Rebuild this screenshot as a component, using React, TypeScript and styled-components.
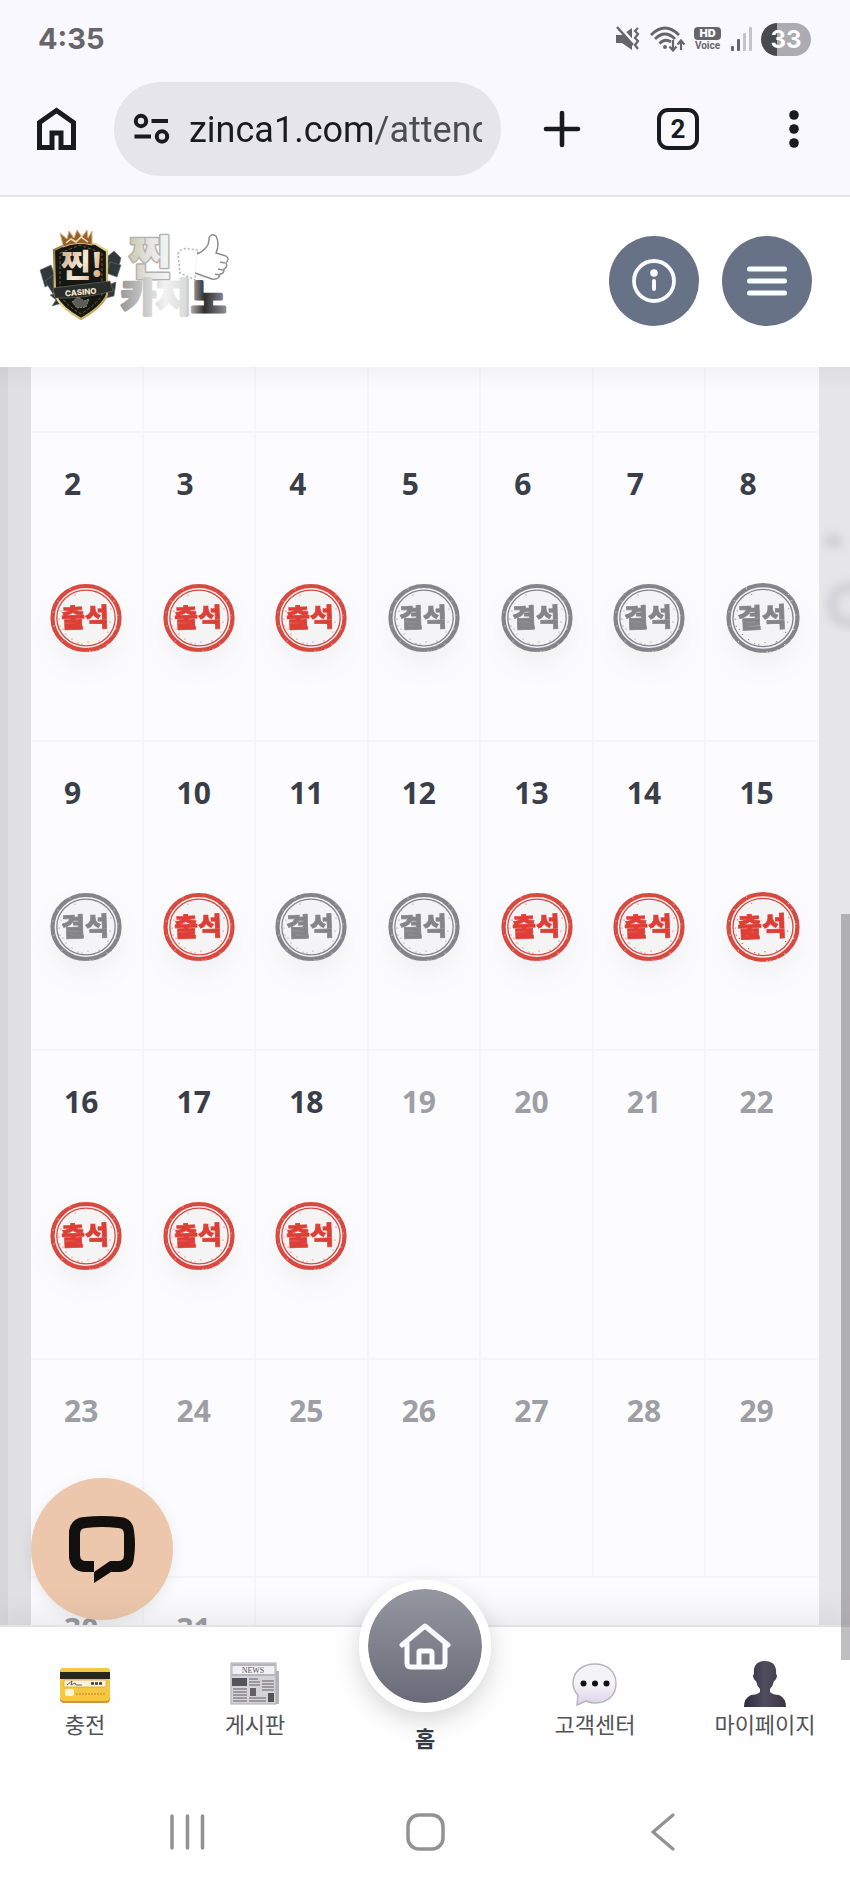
import React from "react";
import styled, { createGlobalStyle } from "styled-components";

const sans = `"Noto Sans", "Noto Sans CJK KR", sans-serif`;
const korean = `"Noto Sans CJK KR", "Noto Sans", sans-serif`;

const GlobalStyle = createGlobalStyle`
  *, *::before, *::after { box-sizing: border-box; }
  html, body { margin: 0; padding: 0; }
  body { font-family: ${sans}; background: #ffffff; }
  button { border: 0; padding: 0; background: none; font: inherit; color: inherit; cursor: pointer; }
  svg { display: block; }
`;

const Shell = styled.div`
  position: relative;
  display: flex;
  flex-direction: column;
  height: 100vh;
  overflow: hidden;
`;

/* ---------- phone status bar and browser toolbar ---------- */

const BrowserChrome = styled.div`
  flex: none;
  background: #f9f8fe;
  border-bottom: 2px solid #e5e2ea;
`;

const StatusBar = styled.div`
  display: flex;
  align-items: center;
  justify-content: space-between;
  height: 80px;
  padding: 0 39px 2px 38px;
`;

const Clock = styled.time`
  font: 700 29px/40px Inter, sans-serif;
  color: #66656a;
`;

const StatusIcons = styled.div`
  display: flex;
  align-items: center;
  gap: 9px;
  color: #66656a;
`;

const VoiceBadge = styled.div`
  display: flex;
  flex-direction: column;
  align-items: center;
  width: 27px;
  font: 700 10px/12px Roboto, sans-serif;
`;

const HdTag = styled.span`
  width: 27px;
  border-radius: 4px;
  background: #66656a;
  color: #f9f8fe;
  font: 900 11px/13px Inter, sans-serif;
  text-align: center;
`;

const Battery = styled.div`
  width: 50px;
  border-radius: 17px;
  background: linear-gradient(90deg, #4a494e 16px, #acabb1 16px);
  color: #ffffff;
  font: 700 24px/33px Inter, sans-serif;
  text-align: center;
`;

const Toolbar = styled.div`
  display: flex;
  align-items: center;
  height: 115px;
  padding: 0 35px 17px 37px;
  color: #1a1b20;
`;

const AddressPill = styled.label`
  display: flex;
  flex: 1;
  align-items: center;
  gap: 19px;
  min-width: 0;
  height: 94px;
  margin: 0 40px 0 38px;
  padding: 0 19px;
  border-radius: 47px;
  background: #e6e5ec;
`;

const AddressInput = styled.input`
  flex: 1;
  min-width: 0;
  height: 62px;
  padding: 2px 0 0;
  border: 0;
  outline: 0;
  background: linear-gradient(90deg, #1a1b20 186px, #4b4c52 188px);
  background-clip: text;
  -webkit-text-fill-color: transparent;
  font: 400 36px/60px Roboto, sans-serif;
`;

const ToolbarActions = styled.div`
  display: flex;
  gap: 74px;
`;

const ToolButton = styled.button`
  display: flex;
  align-items: center;
  justify-content: center;
  min-width: 39px;
  height: 44px;
`;

const ActionButton = styled(ToolButton)`
  width: 42px;
`;

const TabCount = styled.span`
  width: 42px;
  border: 4px solid #1a1b20;
  border-radius: 11px;
  font: 700 26px/34px Roboto, sans-serif;
  text-align: center;
`;

/* ---------- site header ---------- */

const SiteHeader = styled.header`
  display: flex;
  flex: none;
  align-items: center;
  justify-content: space-between;
  height: 170px;
  padding: 0 38px 2px 30px;
  background: #ffffff;
`;

const HeaderButtons = styled.div`
  display: flex;
  gap: 23px;
`;

const RoundButton = styled.button`
  display: flex;
  align-items: center;
  justify-content: center;
  width: 90px;
  height: 90px;
  border-radius: 50%;
  background: #687287;
`;

/* ---------- calendar ---------- */

const Main = styled.main`
  position: relative;
  flex: 1;
  min-height: 0;
  padding: 0 31px;
  overflow: hidden;
  background: linear-gradient(90deg, #d7d6d9 8px, #e1e0e3 8px, #e1e0e3 50%, #e6e5e9 50%);

  &::after {
    content: "";
    position: absolute;
    inset: 0 0 auto;
    height: 24px;
    background: linear-gradient(rgba(0, 0, 0, 0.035), transparent);
  }
`;

const Backdrop = styled.svg`
  position: absolute;
  top: 150px;
  right: 0;
`;

const Calendar = styled.table`
  width: 100%;
  table-layout: fixed;
  border-spacing: 0;
  background: #fcfbfe;
`;

const Week = styled.tr<{ $height: number }>`
  height: ${(p) => p.$height}px;
`;

const DayCell = styled.td`
  padding: 31px 0 0;
  border-right: 2px solid #f6f5f8;
  border-bottom: 2px solid #f5f4f7;
  vertical-align: top;

  &:last-child { border-right: 0; }
`;

const DayNumber = styled.div<{ $muted: boolean }>`
  padding-left: 33px;
  font-size: 30px;
  font-weight: 700;
  line-height: 40px;
  color: ${(p) => (p.$muted ? "#9d9fa4" : "#393e49")};
`;

const StampImage = styled.svg<{ $large: boolean }>`
  width: ${(p) => (p.$large ? 74 : 72)}px;
  height: ${(p) => (p.$large ? 74 : 72)}px;
  margin: ${(p) => (p.$large ? 77 : 78)}px auto 0;
  overflow: visible;
  border-radius: 50%;
  filter: drop-shadow(0 14px 12px rgba(60, 60, 70, 0.06));
`;

const ChatButton = styled.button`
  position: absolute;
  left: 31px;
  bottom: 5px;
  z-index: 1;
  display: flex;
  align-items: center;
  justify-content: center;
  width: 142px;
  height: 142px;
  border-radius: 50%;
  background: #ecc7ab;
  box-shadow: 0 4px 16px rgba(0, 0, 0, 0.08);
`;

/* ---------- bottom navigation ---------- */

const BottomNav = styled.nav`
  position: relative;
  z-index: 2;
  display: flex;
  flex: none;
  height: 148px;
  border-top: 2px solid #e3e2e5;
  background: #fefefe;
  box-shadow: 0 -8px 32px rgba(0, 0, 0, 0.08);
`;

const NavLink = styled.a`
  display: flex;
  flex: 1;
  flex-direction: column;
  align-items: center;
  gap: 1px;
  padding-top: 34px;
  color: #505256;
  font: 400 22px/30px ${korean};
  text-decoration: none;
  white-space: nowrap;
`;

const HomeLink = styled(NavLink)`
  gap: 10px;
  margin-top: -47px;
  padding-top: 0;
  color: #343a46;
  font-weight: 700;
`;

const HomeDisc = styled.span`
  display: flex;
  align-items: center;
  justify-content: center;
  width: 132px;
  height: 132px;
  border: 9px solid #ffffff;
  border-radius: 50%;
  background: linear-gradient(#9497a0, #696b78) padding-box;
  box-shadow: 0 8px 24px rgba(0, 0, 0, 0.16);
`;

const SystemNav = styled.div`
  position: relative;
  z-index: 2;
  display: flex;
  flex: none;
  align-items: center;
  justify-content: space-between;
  height: 116px;
  padding: 2px 168px 0;
  background: #fefefe;
  color: #929196;
`;

const ScrollThumb = styled.div`
  position: absolute;
  top: 48.4%;
  right: 0;
  z-index: 3;
  width: 9px;
  height: 39.5%;
  background: rgba(90, 88, 92, 0.38);
`;

/* ---------- drawings ---------- */

const HomeOutline = () => (
  <svg width="39" height="44" viewBox="0 0 39 44" fill="none" stroke="currentColor" strokeWidth="5">
    <path d="M2.5 40.5V15.5L19.5 3.5L36.5 15.5V40.5H24V26H15V40.5Z" />
  </svg>
);

const TuneIcon = () => (
  <svg width="37" height="32" viewBox="0 0 37 32" fill="none" stroke="currentColor" strokeWidth="4">
    <circle cx="8" cy="8" r="5.2" />
    <path d="M18.5 8H35M1.5 23.5H18" />
    <circle cx="29" cy="23.5" r="5.2" />
  </svg>
);

const MuteIcon = () => (
  <svg width="26" height="26" viewBox="0 0 26 26">
    <path d="M1 9H7L17 2V24L7 17H1Z" fill="currentColor" />
    <path d="M3 -1L20 18" stroke="#f9f8fe" strokeWidth="3" />
    <path d="M2 1L18 19" stroke="currentColor" strokeWidth="2.5" />
    <path d="M23 2l-3 3 3 3-3 4 3 3-3 4 3 4" fill="none" stroke="currentColor" strokeWidth="2.2" />
  </svg>
);

const WifiIcon = () => (
  <svg width="35" height="26" viewBox="0 0 35 26" fill="none" stroke="currentColor" strokeWidth="2.8">
    <path d="M1 9Q15 -5 29 9M5 13Q15 3 25 13M9.5 17.500Q15 12 21 16" />
    <circle cx="15" cy="21" r="2" fill="currentColor" stroke="none" />
    <path d="M23 14V24M19.5 20.5L23 24.5L26.5 20.5M31 24V15M27.5 18.5L31 14.5L34.5 18.5" strokeWidth="2.2" />
  </svg>
);

const SignalIcon = () => (
  <svg width="22" height="24" viewBox="0 0 22 24">
    <rect x="1" y="19" width="3" height="5" rx="1" fill="currentColor" />
    <rect x="7" y="12" width="3" height="12" rx="1" fill="currentColor" />
    <rect x="13" y="6" width="3" height="18" rx="1" fill="#c4c3c9" />
    <rect x="19" y="0" width="3" height="24" rx="1" fill="#c4c3c9" />
  </svg>
);

const Logo = () => (
  <svg width="210" height="105" viewBox="0 9 210 105" role="img" aria-label="찐카지노">
    <defs>
      <linearGradient id="gold" x1="0" y1="0" x2="1" y2="1">
        <stop offset="0" stopColor="#8a6a2c" />
        <stop offset="0.4" stopColor="#f0dc96" />
        <stop offset="1" stopColor="#b09646" />
      </linearGradient>
      <linearGradient id="face" x1="0" y1="0" x2="1" y2="0.6">
        <stop offset="0" stopColor="#c69a75" />
        <stop offset="0.6" stopColor="#f5ead9" />
        <stop offset="1" stopColor="#dcae86" />
      </linearGradient>
      <linearGradient id="silverTop">
        <stop offset="0" stopColor="#cbc7b2" />
        <stop offset="0.5" stopColor="#e6e6e3" />
        <stop offset="1" stopColor="#f6f6f6" />
      </linearGradient>
      <linearGradient id="silverBottom" x1="92" x2="195" y1="0" y2="0" gradientUnits="userSpaceOnUse">
        <stop offset="0" stopColor="#9b9b9b" />
        <stop offset="0.42" stopColor="#f2f2f2" />
        <stop offset="0.62" stopColor="#dadada" />
        <stop offset="0.8" stopColor="#2f2f2f" />
        <stop offset="1" stopColor="#8a8a8a" />
      </linearGradient>
    </defs>
    <g fill="#30383b" stroke="#667074" strokeWidth="0.6">
      <path d="M10 50L21 45L27 61L15 67Z" />
      <path d="M15 61L26 53L30 69L23 74Z" />
      <path d="M78 36L84 31L91 38L87 54L77 49Z" />
      <path d="M80 42L91 45L87 57L76 53Z" />
      <path d="M20 75L37 70L36 82L22 86L26 80ZM69 68L86 62L84 76L72 79Z" />
    </g>
    <path d="M24 30L37 24L50 22L66 24L77 31L77 75Q72 87 51 99Q31 88 25 75Z" fill="#151713" stroke="url(#gold)" strokeWidth="2.2" />
    <path d="M30 33L50 25L72 33V75Q67 84 51 94Q36 85 30 75Z" fill="none" stroke="#7d7654" strokeWidth="0.8" strokeDasharray="3 2" />
    <path d="M33 25L30 13L37 19L39 11L44 18L47 10L52 17L57 10L58 18L62 11L62 25Q47 21 33 27Z" fill="#936130" stroke="#ddb278" strokeWidth="1" />
    <path d="M36 23L41 19L46 22L51 17L58 22" fill="none" stroke="#f4dfb0" strokeWidth="1.5" />
    <text x="31" y="57" fontFamily="Noto Sans CJK KR, sans-serif" fontWeight="900" fontSize="32" fill="url(#face)">찐!</text>
    <path d="M23 68Q48 65 80 61L83 71Q54 79 25 78Z" fill="#292d2b" stroke="#757565" strokeWidth="0.6" />
    <text x="35" y="75" transform="rotate(-5 51 72)" fontFamily="Inter, sans-serif" fontWeight="800" fontSize="8" fill="#f3e6ca">CASINO</text>
    <path d="M42 82L48 77L54 81L59 79L56 87L47 88Z" fill="#5b5c55" stroke="#a7a395" strokeWidth="0.7" strokeDasharray="2 1" />
    <g fontFamily="Noto Sans CJK KR, sans-serif" fontWeight="900" strokeWidth="3" strokeLinejoin="round" paintOrder="stroke">
      <text x="99" y="54" fontSize="46" fill="url(#silverTop)" stroke="#b2b2b0">찐</text>
      <text x="91" y="91" fontSize="38" fill="url(#silverBottom)" stroke="url(#silverBottom)">카지노</text>
    </g>
    <g fill="#ffffff" stroke="#8d8d8d" strokeWidth="1.5" strokeLinejoin="round">
      <path d="M148 34Q151 27 160 29L168 30L165 60L150 53Z" stroke="#b4b4b4" strokeDasharray="2 2" />
      <path d="M167 34Q180 28 179 18Q181 13 186 16Q190 24 186 33L196 36Q200 39 196 43Q198 47 194 49Q194 54 190 54Q189 60 182 59L165 53" />
      <path d="M190 42l5 1M188 49l5 1M185 54l4 1" fill="none" />
    </g>
  </svg>
);

const InfoIcon = () => (
  <svg width="44" height="44" viewBox="0 0 44 44" fill="none" stroke="#f8fbff" strokeLinecap="round">
    <circle cx="22" cy="22" r="20" strokeWidth="3.8" />
    <path d="M22 22V30" strokeWidth="4" />
    <circle cx="22" cy="14" r="3.8" fill="#f8fbff" stroke="none" />
  </svg>
);

const MenuIcon = () => (
  <svg width="42" height="30" viewBox="0 0 42 30" stroke="#f8ffff" strokeWidth="5" strokeLinecap="round">
    <path d="M3.5 3H38.5M3.5 15H38.5M3.5 27H38.5" />
  </svg>
);

type StampKind = "출석" | "결석";

const specks = [
  [51, 12], [54, 14], [46, 10], [13, 47], [10, 44], [16, 52], [28, 61], [32, 62], [38, 60],
  [22, 57], [58, 50], [61, 27], [11, 29], [44, 63], [49, 59], [60, 40], [25, 13], [9, 37],
];
const scratches = [
  [49, 3], [53, 5], [61, 13], [68, 33], [66, 47], [40, 69], [43, 69], [36, 70], [12, 59],
  [4, 44], [3, 30], [8, 19], [20, 7], [57, 62], [50, 67], [64, 19],
];

function Stamp({ kind, large }: { kind: StampKind; large: boolean }) {
  const present = kind === "출석";
  const ink = present ? "#d8493f" : "#858489";
  const letters = present ? "#dd3e35" : "#858489";
  return (
    <StampImage $large={large} viewBox="0 0 72 72" role="img" aria-label={kind}>
      <ellipse cx="36" cy="36" rx="33.5" ry="32" fill={present ? "#f5f4f4" : "#f4f3f7"} stroke={ink} strokeWidth="4.2" />
      <ellipse cx="36" cy="36" rx="29.2" ry="27.8" fill="none" stroke={ink} strokeWidth="1.3" />
      {scratches.map(([x, y]) => (
        <circle key={`${x}-${y}`} cx={x} cy={y} r="0.6" fill="#f7eeee" />
      ))}
      {specks.map(([x, y]) => (
        <circle key={`${x}-${y}`} cx={x} cy={y} r="0.6" fill={ink} />
      ))}
      <text
        x="35"
        y="45"
        textAnchor="middle"
        transform="rotate(-2 36 36)"
        fontFamily="Noto Sans CJK KR, sans-serif"
        fontWeight="900"
        fontSize="26"
        fill={letters}
        stroke={letters}
        strokeWidth="0.7"
      >
        {kind}
      </text>
    </StampImage>
  );
}

const ChatIcon = () => (
  <svg width="68" height="68" viewBox="0 0 68 68">
    <path
      fillRule="evenodd"
      fill="#11100f"
      d="M16 2Q34 0 52 2Q65 3 66 16Q68 29 66 43Q65 56 52 57H43L26 68V57H16Q3 56 1 43V16Q3 3 16 2ZM18 13Q12 13 12 19V40Q12 46 18 46H26V57L42 46H50Q56 46 56 40V19Q56 13 50 13Q34 11 18 13Z"
    />
  </svg>
);

const CardIcon = () => (
  <svg width="50" height="46" viewBox="0 0 50 46">
    <rect y="7" width="50" height="35" rx="4" fill="#d98f43" />
    <rect y="7" width="50" height="33" rx="4" fill="#f6c740" />
    <path d="M0 11H50V18H0Z" fill="#272622" />
    <rect x="4" y="19" width="42" height="7" rx="1" fill="#fbf3d7" stroke="#dba640" strokeWidth="0.8" />
    <path d="M7 24l5-4-1 4 4-2 1 2h6" fill="none" stroke="#55534b" strokeWidth="0.9" />
    <path d="M31 22.5H42" stroke="#3e3c34" strokeWidth="2.4" strokeDasharray="3 1" />
    <rect x="5" y="28" width="9" height="7" rx="2" fill="#fff6d5" />
    <path d="M16 33H45" stroke="#dca23c" strokeWidth="2" strokeDasharray="2 1" />
  </svg>
);

const NewsIcon = () => (
  <svg width="50" height="46" viewBox="0 0 50 46">
    <rect x="40" y="10" width="9" height="33" fill="#b5b4b9" />
    <rect x="1" y="2" width="45" height="41" fill="#d4d3d7" stroke="#aaa9ae" />
    <rect x="3" y="5" width="41" height="8" fill="#f1f0f2" />
    <path d="M2 4H45M2 14H45" stroke="#98979c" />
    <text x="23" y="12" textAnchor="middle" fontFamily="Liberation Serif, serif" fontSize="8" fill="#55545a">NEWS</text>
    <rect x="2" y="17" width="15" height="8" fill="#55545a" />
    <path d="M19 18H28M3 28H17M3 31H17M3 34H17M3 37H17M3 40H17M19 21H30M19 24H30M19 37H36M19 40H36M32 20H44M32 23H44M32 26H44M32 29H44" stroke="#88878d" strokeWidth="1.5" />
    <rect x="20" y="27" width="6" height="8" fill="#626168" />
    <rect x="38" y="32" width="6" height="9" fill="#55545a" />
  </svg>
);

const SpeechIcon = () => (
  <svg width="46" height="46" viewBox="0 0 46 46">
    <defs>
      <linearGradient id="bubble" x1="0" y1="0" x2="0" y2="1">
        <stop offset="0.5" stopColor="#f4f3f6" />
        <stop offset="1" stopColor="#dcd0ec" />
      </linearGradient>
    </defs>
    <path d="M23 3C36 3 44 11 44 22.5S36 42 23 42Q18 42 14 40L5 44L6 34Q1 29 1 22C1 11 10 3 23 3Z" fill="url(#bubble)" stroke="#b5b3b9" strokeWidth="1.4" />
    <g fill="#111014">
      <circle cx="11.5" cy="22.5" r="3" />
      <circle cx="23" cy="22.5" r="3" />
      <circle cx="34.5" cy="22.5" r="3" />
    </g>
  </svg>
);

const PersonIcon = () => (
  <svg width="46" height="46" viewBox="0 0 46 46">
    <defs>
      <linearGradient id="bust">
        <stop offset="0" stopColor="#2e2b3b" />
        <stop offset="0.5" stopColor="#504d5f" />
        <stop offset="1" stopColor="#393544" />
      </linearGradient>
    </defs>
    <path d="M23 0C31 0 35 5 34 13Q36 14 34 18Q33 20 32 20Q31 25 28 28V31Q31 34 37 34Q44 37 44 46H2Q2 37 9 34Q15 34 18 31V28Q15 25 14 20Q13 20 12 18Q10 14 12 13C11 5 15 0 23 0Z" fill="url(#bust)" />
  </svg>
);

const HouseIcon = () => (
  <svg width="52" height="48" viewBox="0 0 52 48" fill="none" stroke="#f8fbff" strokeWidth="5" strokeLinecap="round" strokeLinejoin="round">
    <path d="M3 23L26 4L49 23M8 22V41Q8 45 12 45H42Q46 45 46 41V22" />
    <path d="M20 44V30Q20 29 21 29H31Q33 29 33 31V44" />
  </svg>
);

/* ---------- data ---------- */

type Day = { date: number; stamp?: StampKind; muted?: boolean };

const O: StampKind = "출석";
const X: StampKind = "결석";

const makeWeek = (start: number, stamps: (StampKind | undefined)[]): Day[] =>
  stamps.map((stamp, i) => ({ date: start + i, stamp, muted: !stamp }));

const none = undefined;
const weeks = [
  { height: 309, days: makeWeek(2, [O, O, O, X, X, X, X]) },
  { height: 309, days: makeWeek(9, [X, O, X, X, O, O, O]) },
  { height: 309, days: makeWeek(16, [O, O, O, none, none, none, none]) },
  { height: 218, days: makeWeek(23, [none, none, none, none, none, none, none]) },
];

export default function App() {
  return (
    <Shell>
      <GlobalStyle />
      <BrowserChrome>
        <StatusBar>
          <Clock>4:35</Clock>
          <StatusIcons>
            <MuteIcon />
            <WifiIcon />
            <VoiceBadge>
              <HdTag>HD</HdTag>
              Voice
            </VoiceBadge>
            <SignalIcon />
            <Battery>33</Battery>
          </StatusIcons>
        </StatusBar>
        <Toolbar>
          <ToolButton aria-label="홈페이지"><HomeOutline /></ToolButton>
          <AddressPill>
            <TuneIcon />
            <AddressInput aria-label="주소" defaultValue="zinca1.com/attend" />
          </AddressPill>
          <ToolbarActions>
            <ActionButton aria-label="새 탭">
              <svg width="38" height="38" viewBox="0 0 38 38" stroke="currentColor" strokeWidth="4.6" strokeLinecap="round">
                <path d="M19 3V35M3 19H35" />
              </svg>
            </ActionButton>
            <ActionButton><TabCount>2</TabCount></ActionButton>
            <ActionButton aria-label="더보기">
              <svg width="10" height="38" viewBox="0 0 10 38" fill="currentColor">
                <circle cx="5" cy="5" r="4.8" />
                <circle cx="5" cy="19" r="4.8" />
                <circle cx="5" cy="33" r="4.8" />
              </svg>
            </ActionButton>
          </ToolbarActions>
        </Toolbar>
      </BrowserChrome>

      <SiteHeader>
        <Logo />
        <HeaderButtons>
          <RoundButton aria-label="정보"><InfoIcon /></RoundButton>
          <RoundButton aria-label="메뉴"><MenuIcon /></RoundButton>
        </HeaderButtons>
      </SiteHeader>

      <Main>
        <Backdrop width="31" height="140" viewBox="0 0 31 140" aria-hidden="true">
          <defs>
            <filter id="soften"><feGaussianBlur stdDeviation="4" /></filter>
          </defs>
          <g filter="url(#soften)">
            <rect x="6" y="17" width="17" height="14" fill="#d2d1d5" />
            <circle cx="31" cy="88" r="18" fill="none" stroke="#d3d2d6" strokeWidth="12" />
          </g>
        </Backdrop>
        <Calendar>
          <tbody>
            <Week $height={66}>
              {weeks[0].days.map((d) => <DayCell key={d.date} />)}
            </Week>
            {weeks.map((week) => (
              <Week key={week.days[0].date} $height={week.height}>
                {week.days.map((day, i) => (
                  <DayCell key={day.date}>
                    <DayNumber $muted={!!day.muted}>{day.date}</DayNumber>
                    {day.stamp && <Stamp kind={day.stamp} large={i === 6} />}
                  </DayCell>
                ))}
              </Week>
            ))}
            <Week $height={218}>
              <DayCell><DayNumber $muted>30</DayNumber></DayCell>
              <DayCell><DayNumber $muted>31</DayNumber></DayCell>
              <DayCell colSpan={5} />
            </Week>
          </tbody>
        </Calendar>
        <ChatButton aria-label="채팅"><ChatIcon /></ChatButton>
      </Main>

      <BottomNav>
        <NavLink href="#charge"><CardIcon />충전</NavLink>
        <NavLink href="#board"><NewsIcon />게시판</NavLink>
        <HomeLink href="#home"><HomeDisc><HouseIcon /></HomeDisc>홈</HomeLink>
        <NavLink href="#support"><SpeechIcon />고객센터</NavLink>
        <NavLink href="#mypage"><PersonIcon />마이페이지</NavLink>
      </BottomNav>

      <SystemNav>
        <ToolButton aria-label="최근 앱">
          <svg width="35" height="36" viewBox="0 0 35 36" stroke="currentColor" strokeWidth="3.5" strokeLinecap="round">
            <path d="M2 2V34M17.5 2V34M32.5 2V34" />
          </svg>
        </ToolButton>
        <ToolButton aria-label="홈 화면">
          <svg width="39" height="38" viewBox="0 0 39 38" fill="none" stroke="currentColor" strokeWidth="3.5">
            <rect x="2" y="2" width="35" height="34" rx="11" />
          </svg>
        </ToolButton>
        <ToolButton aria-label="뒤로">
          <svg width="24" height="38" viewBox="0 0 24 38" fill="none" stroke="currentColor" strokeWidth="3.2" strokeLinecap="round" strokeLinejoin="round">
            <path d="M22 2L2 19L22 36" />
          </svg>
        </ToolButton>
      </SystemNav>
      <ScrollThumb />
    </Shell>
  );
}
